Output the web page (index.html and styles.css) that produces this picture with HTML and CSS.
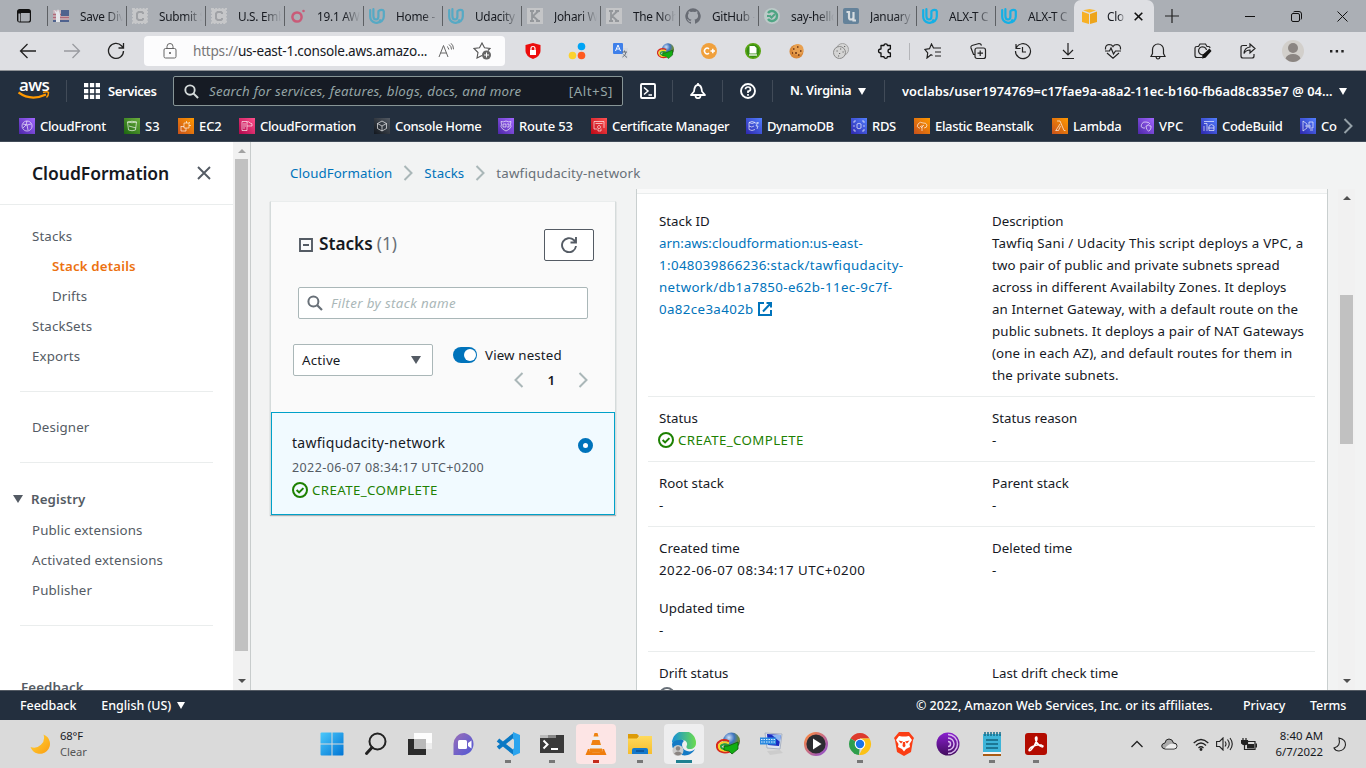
FILE: index.html
```html
<!DOCTYPE html>
<html lang="en">
<head>
<meta charset="utf-8">
<title>CloudFormation - Stack tawfiqudacity-network</title>
<link rel="stylesheet" href="styles.css">
</head>
<body>
<svg width="0" height="0" class="defs">
  <defs>
    <linearGradient id="gp" x1="0" y1="1" x2="1" y2="0"><stop offset="0" stop-color="#4d27a8"/><stop offset="1" stop-color="#a166ff"/></linearGradient>
    <linearGradient id="gg" x1="0" y1="1" x2="1" y2="0"><stop offset="0" stop-color="#1b660f"/><stop offset="1" stop-color="#6cae3e"/></linearGradient>
    <linearGradient id="go" x1="0" y1="1" x2="1" y2="0"><stop offset="0" stop-color="#c8511b"/><stop offset="1" stop-color="#f90"/></linearGradient>
    <linearGradient id="gk" x1="0" y1="1" x2="1" y2="0"><stop offset="0" stop-color="#b0084d"/><stop offset="1" stop-color="#ff4f8b"/></linearGradient>
    <linearGradient id="gr" x1="0" y1="1" x2="1" y2="0"><stop offset="0" stop-color="#bd0816"/><stop offset="1" stop-color="#ff5252"/></linearGradient>
    <linearGradient id="gb" x1="0" y1="1" x2="1" y2="0"><stop offset="0" stop-color="#2e27ad"/><stop offset="1" stop-color="#527fff"/></linearGradient>
    <linearGradient id="gd" x1="0" y1="1" x2="1" y2="0"><stop offset="0" stop-color="#12171e"/><stop offset="1" stop-color="#545b64"/></linearGradient>
    <linearGradient id="win" x1="0" y1="0" x2="1" y2="1"><stop offset="0" stop-color="#4cc9fb"/><stop offset="1" stop-color="#0074d4"/></linearGradient>
    <linearGradient id="moon" x1="0" y1="0" x2="1" y2="1"><stop offset="0" stop-color="#ffd83a"/><stop offset="1" stop-color="#fb9c10"/></linearGradient>
    <linearGradient id="chat" x1="0" y1="0" x2="1" y2="1"><stop offset="0" stop-color="#9a6fb8"/><stop offset="1" stop-color="#4f57d6"/></linearGradient>
    <linearGradient id="edge" x1="0" y1="0" x2="1" y2="0"><stop offset="0" stop-color="#168fd8"/><stop offset="1" stop-color="#6bdc4e"/></linearGradient>
    <linearGradient id="fold" x1="0" y1="0" x2="0" y2="1"><stop offset="0" stop-color="#ffda5c"/><stop offset="1" stop-color="#f6bd2f"/></linearGradient>
    <linearGradient id="ring" x1="0" y1="0" x2="1" y2="1"><stop offset="0" stop-color="#ff8a3c"/><stop offset="1" stop-color="#8d4fd0"/></linearGradient>
    <linearGradient id="tor" x1="0" y1="0" x2="0" y2="1"><stop offset="0" stop-color="#8a1fd0"/><stop offset="1" stop-color="#420c5d"/></linearGradient>
    <radialGradient id="globe" cx=".35" cy=".3" r=".8"><stop offset="0" stop-color="#cfe0f4"/><stop offset=".4" stop-color="#3f74c0"/><stop offset=".75" stop-color="#6f8c2c"/><stop offset="1" stop-color="#1d2f50"/></radialGradient>
    <symbol id="uda" viewBox="0 0 16 16"><path d="M1.200 2.200v6.300c0 3 2 5.300 5 6.200 2.600.4 4.600-.8 5-2.500M4.400 1.200v6.800c0 2.200 1 3.500 2.600 3.500s2.400-1.200 2.400-3V3.200c2.300-1.700 5-1.700 5.400 0v5.300c0 3.500-3 6-6.400 6" fill="none" stroke="currentColor" stroke-width="2.200" stroke-linecap="round" stroke-linejoin="round"/></symbol>
    <symbol id="stamp" viewBox="0 0 16 16"><rect x="1" y="1" width="14" height="14" fill="#c6c7c9" stroke="#c6c7c9" stroke-width="2" stroke-dasharray="2 1.200"/><path d="M11 6V5L10 4H6.500L5 5.500v5L6.500 12H10l1-1v-1" fill="none" stroke="#a0a2a6" stroke-width="2"/></symbol>
    <symbol id="kk" viewBox="0 0 16 16"><path fill="#c4c5c7" d="M0 0h16v16H0z"/><path d="M3 3h4M3 13h4M5 3v10M9 3h4M9 13h4M11.500 3 6 8l5.500 5" fill="none" stroke="#94979b" stroke-width="1.800"/></symbol>
    <symbol id="idm" viewBox="0 0 24 24"><circle cx="15.500" cy="9" r="8.500" fill="url(#globe)"/><g fill="none"><path d="M13 9.500C6 6 0 10 1 15c1 5 7 6.500 13 4.500" stroke="#d8281c" stroke-width="2"/><path d="M13 11.500c-6-3-10.500 0-10 3.500.6 3.500 5 4.500 10 3" stroke="#f6d423" stroke-width="2"/><path d="M13 13.500c-4-2-8.500-1-8 1.500.5 2.200 4 2.800 8 1.500" stroke="#27a03a" stroke-width="2"/></g><path d="M8 14h4l10-4v7l-6 5-3-3-5-1z" fill="#12ae12" stroke="#0a5a08" stroke-width=".8"/></symbol>
    <symbol id="ok" viewBox="0 0 16 16"><circle cx="8" cy="8" r="7" fill="none" stroke="#1d8102" stroke-width="2"/><path d="M4.600 8l2.500 2.400 4.300-4.300" fill="none" stroke="#1d8102" stroke-width="2"/></symbol>
    <symbol id="mag" viewBox="0 0 16 16"><circle cx="6.400" cy="6.400" r="5" fill="none" stroke="currentColor" stroke-width="2"/><path d="M10 10l5 5" stroke="currentColor" stroke-width="2.200"/></symbol>
    <symbol id="chev" viewBox="0 0 10 16"><path d="M1.500 1l7 7-7 7" fill="none" stroke="currentColor" stroke-width="2"/></symbol>
  </defs>
</svg>

<div class="tabs">
  <div class="tabmenu"><svg width="16" height="16" viewBox="0 0 16 16"><rect x="1.600" y="1.600" width="12.800" height="12.400" rx="2" fill="none" stroke="#111" stroke-width="1.200"/><path d="M2 2h12v3H5v9H2z" fill="#111"/><path d="M2.400 5.500h2v8h-2z" fill="#abafb5"/></svg></div>
  <div class="tab"><svg width="16" height="16" viewBox="0 0 16 16"><path fill="#c9b7bd" d="M0 2h16v12H0z"/><path d="M0 6.500h16M0 9.500h16M0 12.500h16" stroke="#b06878" stroke-width="1.500"/><path fill="#4f628e" d="M8 2h8v6H8zM0 12h16v2H0z"/><path fill="#e4e6ea" d="M3 14V6L1 2l3 2 1-3 2 5v8z"/></svg><span>Save Div</span></div>
  <div class="tab"><svg width="16" height="16"><use href="#stamp"/></svg><span>Submit S</span></div>
  <div class="tab"><svg width="16" height="16"><use href="#stamp"/></svg><span>U.S. Emb</span></div>
  <div class="tab"><svg width="16" height="16" viewBox="0 0 16 16"><circle cx="7" cy="9" r="4.600" fill="none" stroke="#c95b78" stroke-width="2.500"/><circle cx="13.500" cy="3" r="1.300" fill="#c95b78"/></svg><span>19.1 AW</span></div>
  <div class="tab dim"><svg width="16" height="16"><use href="#uda"/></svg><span>Home -</span></div>
  <div class="tab dim"><svg width="16" height="16"><use href="#uda"/></svg><span>Udacity</span></div>
  <div class="tab"><svg width="16" height="16"><use href="#kk"/></svg><span>Johari W</span></div>
  <div class="tab"><svg width="16" height="16"><use href="#kk"/></svg><span>The Noh</span></div>
  <div class="tab"><svg width="16" height="16" viewBox="0 0 16 16"><path fill="#686c74" d="M8 .2a8 8 0 0 0-2.500 15.500c.4 0 .5-.2.500-.4v-1.500c-2.200.5-2.700-1-2.700-1-.4-.9-.9-1.200-.9-1.200-.7-.5 0-.5 0-.5.800 0 1.200.8 1.200.8.700 1.200 1.900.9 2.400.7 0-.5.300-.9.500-1.100-1.800-.2-3.600-.9-3.600-4 0-.9.300-1.600.8-2.100 0-.2-.3-1 .1-2.100 0 0 .7-.2 2.200.8a7.500 7.500 0 0 1 4 0c1.500-1 2.200-.8 2.200-.8.400 1.100.1 1.900.1 2.100.5.500.8 1.200.8 2.100 0 3.100-1.900 3.800-3.700 4 .3.300.6.800.6 1.500v2.300c0 .2.100.4.500.4A8 8 0 0 0 8 .2z"/></svg><span>GitHub -</span></div>
  <div class="tab"><svg width="16" height="16" viewBox="0 0 16 16"><circle cx="8" cy="8" r="8" fill="#bccac8"/><path d="M4 5a5 5 0 1 1 0 6" fill="none" stroke="#4fa584" stroke-width="2.400"/><path d="M3 8h2.500M5.500 7.500l2 2L11 6" fill="none" stroke="#4fa584" stroke-width="2"/></svg><span>say-hello</span></div>
  <div class="tab"><svg width="16" height="16" viewBox="0 0 16 16"><rect width="16" height="16" rx="2" fill="#64829a"/><path d="M3.500 4H6v5.500q0 2 2 2t2.500-2V4M10.500 4v8.500H13" fill="none" stroke="#d6dce0" stroke-width="2.200"/></svg><span>January</span></div>
  <div class="tab udac"><svg width="16" height="16"><use href="#uda"/></svg><span>ALX-T C</span></div>
  <div class="tab udac"><svg width="16" height="16"><use href="#uda"/></svg><span>ALX-T C</span></div>
  <div class="tab active"><svg width="15" height="15" viewBox="0 0 15 15"><path fill="#f7b024" d="M0 2.500 7 5v10L0 13z"/><path fill="#eda41b" d="M8 5l7-2.500V13l-7 2z"/><path fill="#f9b934" d="M1 1.300 7.500 0 14 1.300 7.500 3.800z"/></svg><span>Clo</span><svg width="9" height="9" viewBox="0 0 9 9"><path d="M.7.7l7.600 7.600M8.300.7.7 8.300" stroke="#111" stroke-width="1.600"/></svg></div>
  <div class="newtab"><svg width="14" height="14" viewBox="0 0 14 14"><path d="M7 0v14M0 7h14" stroke="#222" stroke-width="1.200"/></svg></div>
  <div class="winbtns">
    <svg width="10" height="10" viewBox="0 0 10 10"><path d="M0 5.500h10" stroke="#111"/></svg>
    <svg width="11" height="11" viewBox="0 0 11 11"><rect x=".5" y="2.500" width="8" height="8" rx="1.500" fill="none" stroke="#111"/><path d="M2.500 1q.5-.5 1.500-.5h4q2.500 0 2.500 2.500v4q0 1-.5 1.500" fill="none" stroke="#111"/></svg>
    <svg width="11" height="11" viewBox="0 0 11 11"><path d="M.5.5l10 10M10.500.5l-10 10" stroke="#111"/></svg>
  </div>
</div>

<div class="toolbar">
  <div class="navbtns">
    <svg width="18" height="16" viewBox="0 0 18 16"><path d="M17 8H1.500M8.500 1l-7 7 7 7" fill="none" stroke="#222" stroke-width="1.300"/></svg>
    <svg width="18" height="16" viewBox="0 0 18 16"><path d="M1 8h15.500M9.500 1l7 7-7 7" fill="none" stroke="#999ba0" stroke-width="1.300"/></svg>
    <svg width="18" height="18" viewBox="0 0 18 18"><path d="M16.500 9a7.500 7.500 0 1 1-2-5.200L16.500 6M16.500 1v5h-5" fill="none" stroke="#222" stroke-width="1.300"/></svg>
  </div>
  <div class="url">
    <svg width="14" height="16" viewBox="0 0 14 16"><rect x="1" y="5.500" width="12" height="9.500" rx="1.500" fill="none" stroke="#666"/><path d="M4 5.500V3.500a3 3 0 0 1 6 0v2" fill="none" stroke="#666"/><circle cx="7" cy="10" r="1" fill="#555"/></svg>
    <span class="addr"><i>https://</i>us-east-1.console.aws.amazo...</span>
    <svg width="16" height="16" viewBox="0 0 16 16"><path d="M1 14 5.500 2.500 10 14M2.500 10h6M9 3.500q1.500.8 1.800 3M11 1.500q2.500 1.800 2.500 5M13 .3q2.500 2 2.500 6" fill="none" stroke="#666"/></svg>
    <svg width="18" height="18" viewBox="0 0 18 18"><path d="M9 13.500 4 16l1-5.500-4-4L6.500 5.800 9 1l2.500 4.800 5.500.7-2 2" fill="none" stroke="#555" stroke-width="1.100"/><circle cx="13.500" cy="13" r="4.500" fill="#666"/><path d="M13.500 10.500v5M11 13h5" stroke="#fff"/></svg>
  </div>
  <div class="exts">
    <svg width="16" height="16" viewBox="0 0 16 16"><path fill="#ec0c0c" d="M8 0l7.500 2v6q0 5-7.500 8Q.5 13 .5 8V2z"/><path fill="#fff" d="M5 7h6v5H5z"/><path d="M6 7V5q0-1.500 2-1.500T10 5v2" fill="none" stroke="#fff" stroke-width="1.200"/></svg>
    <svg width="18" height="18" viewBox="0 0 18 18"><circle cx="13.500" cy="4.500" r="3.800" fill="#00a4f5"/><circle cx="4.500" cy="13.500" r="3.800" fill="#fbd22e"/><circle cx="13.500" cy="13.500" r="3.800" fill="#ff5a1f"/></svg>
    <svg width="16" height="16" viewBox="0 0 16 16"><path fill="#d6d9de" d="M7 5h8v10.500H9z"/><rect width="10" height="11" rx="1" fill="#3f80ea"/><path d="M2.500 8 5 2l2.500 6M3.500 6h3" fill="none" stroke="#fff"/><path d="M9 9h5M11.500 7.500V9M13 9q0 3-3.500 5M10.500 11.500l3.500 3" fill="none" stroke="#69727e"/></svg>
    <svg width="17" height="17"><use href="#idm"/></svg>
    <svg width="16" height="16" viewBox="0 0 16 16"><circle cx="8" cy="8" r="8" fill="#f0a03c"/><path d="M8 5.800a2.800 2.800 0 1 0 0 4.400M9.500 8h4.500M11.800 5.800v4.400" fill="none" stroke="#fff" stroke-width="1.500"/></svg>
    <svg width="16" height="16" viewBox="0 0 16 16"><circle cx="8" cy="8" r="7.200" fill="#358d12" stroke="#5aa513" stroke-width="1.600"/><path fill="#fff" d="M4.500 3h5l2 2v5.500h-7z"/><path d="M4 12h8" stroke="#e9f3e2" stroke-width="1.500"/></svg>
    <svg width="16" height="16" viewBox="0 0 16 16"><circle cx="7.500" cy="8.500" r="7" fill="#d9893a"/><circle cx="9" cy="6.500" r="5.500" fill="#e8a050"/><path d="M4 6h1.500M8 4h1.500M6 10h2M11 8h1.500M9 12h1.500M3 10h1" stroke="#6b3212" stroke-width="1.500"/></svg>
    <svg width="16" height="16" viewBox="0 0 16 16"><circle cx="9.500" cy="6.500" r="6" fill="#d4d4d4" stroke="#a2a2a2"/><circle cx="6.500" cy="9.500" r="6" fill="#d4d4d4" stroke="#8a8a8a"/><path d="M3.500 8h1.200M7 6h1.200M6 10.500h1.200M9.500 9h1.200M5 13h1.200M11 3.500h1.200" stroke="#666" stroke-width="1.200"/></svg>
    <svg width="16" height="16" viewBox="0 0 16 16"><path d="M4 2.500h3q0-1.700 1.700-1.700t1.700 1.700h3V6q-2.400 0-2.400 2t2.400 2v3.700h-3q0 1.600-1.700 1.600T7 13.700H4V10Q1.500 10 1.500 8T4 6z" fill="none" stroke="#111" stroke-width="1.300" stroke-linejoin="round"/></svg>
  </div>
  <div class="tsep"></div>
  <div class="exts acts">
    <svg width="18" height="16" viewBox="0 0 18 16"><path d="M8.500 12.500 7 11.800 3 15l.7-5L1 6.500l4.500-.8L7.500 1l2 4H17M11 9h6M11 13h6" fill="none" stroke="#222" stroke-width="1.200"/></svg>
    <svg width="18" height="18" viewBox="0 0 18 18"><rect x="6" y="6" width="10.500" height="10.500" rx="2" fill="none" stroke="#222" stroke-width="1.200"/><path d="M11.200 8.500v5.500M8.500 11.200H14M6 12.500H4.500L2 6q-.5-2 1-2.500L10 1.500q2 0 2.500 2" fill="none" stroke="#222" stroke-width="1.200"/></svg>
    <svg width="18" height="18" viewBox="0 0 18 18"><path d="M2 2v4.500h4.500M2.200 6A7.500 7.500 0 1 1 1.500 9M8.500 5v5H12" fill="none" stroke="#222" stroke-width="1.200"/></svg>
    <svg width="14" height="18" viewBox="0 0 14 18"><path d="M7 1v12M2 8l5 5 5-5M1 16.500h12" fill="none" stroke="#222" stroke-width="1.200"/></svg>
    <svg width="18" height="16" viewBox="0 0 18 16"><path d="M1.500 6.500Q1 2 5 1.500 8 1.500 9 3.500q1-2 4-2Q17 2 16.500 6.500M3 10l6 5.200L15 10M1 8h4.500L7 5l2.500 6L11.500 8H17" fill="none" stroke="#222" stroke-width="1.200"/></svg>
    <svg width="16" height="17" viewBox="0 0 16 17"><path d="M1 13.500h14l-1.500-3V6.500a5.500 5.500 0 0 0-11 0v4zM6 14q.5 2 2 2t2-2" fill="none" stroke="#222" stroke-width="1.200"/></svg>
    <svg width="18" height="16" viewBox="0 0 18 16"><path d="M8 14.500H3q-2 0-2-2V5q0-1.500 2-1.500h1.500L6 1h5.500L13 3.500h1.500Q16 3.500 16 5M11 11a4 4 0 1 1 1.500-4" fill="none" stroke="#222" stroke-width="1.200"/><path d="M15.500 5.500 8.500 12 8 15.500l3.500-.7L17.500 8z" fill="#111"/></svg>
    <svg width="16" height="16" viewBox="0 0 16 16"><path d="M7 2.500H3q-2 0-2 2V13q0 2 2 2h9q2 0 2-2v-2M10 4V1l5 4.500-5 4.500V7q-4 0-6 3.500Q4.500 4.500 10 4z" fill="none" stroke="#222" stroke-width="1.200"/></svg>
    <svg width="22" height="22" viewBox="0 0 22 22"><circle cx="11" cy="11" r="11" fill="#d2cfcb"/><circle cx="11" cy="8" r="5" fill="#8b8582"/><path d="M3.500 18.500Q5 14 11 14t7.500 4.500Q15 22 11 22t-7.500-3.500z" fill="#8b8582"/></svg>
    <svg width="14" height="4" viewBox="0 0 14 4"><path d="M0 1h2.400v2.400H0zM5.700 1h2.400v2.400H5.700zM11.300 1h2.400v2.400h-2.400z" fill="#222"/></svg>
  </div>
</div>

<header class="aws">
  <div class="row1">
    <div class="logo"><b>aws</b><svg width="32" height="9" viewBox="0 0 32 9"><path d="M.5 1.500Q13 10.500 28 3.500" fill="none" stroke="#f90" stroke-width="2.200"/><path d="M25 1.500q4-1.500 5.500 0 0 3.500-2 5" fill="none" stroke="#f90" stroke-width="1.500"/></svg></div>
    <svg class="grid" width="16" height="16" viewBox="0 0 16 16"><path fill="#fff" d="M0 0h4.300v4.300H0zM5.900 0h4.300v4.300H5.900zM11.700 0H16v4.300h-4.300zM0 5.900h4.300v4.300H0zM5.900 5.900h4.300v4.300H5.900zM11.700 5.900H16v4.300h-4.300zM0 11.700h4.300V16H0zM5.900 11.700h4.300V16H5.900zM11.700 11.700H16V16h-4.300z"/></svg>
    <b class="services">Services</b>
    <div class="search"><svg width="15" height="15"><use href="#mag"/></svg><em>Search for services, features, blogs, docs, and more</em><span>[Alt+S]</span></div>
    <div class="hicon"><svg width="16" height="16" viewBox="0 0 16 16"><rect x="1" y="1" width="14" height="14" rx="1" fill="none" stroke="#fff" stroke-width="1.900"/><path d="M4 4.500l4 3.500-4 3.500M8.500 12H12" fill="none" stroke="#fff" stroke-width="1.500"/></svg></div>
    <div class="hicon"><svg width="16" height="16" viewBox="0 0 16 16"><path d="M1 12h14l-3-3.500q-.5-6.500-4-6.500T4 8.500z" fill="none" stroke="#fff" stroke-width="1.800" stroke-linejoin="round"/><path d="M8 0v2M5.500 12.500q0 2.700 2.500 2.700t2.500-2.700" fill="none" stroke="#fff" stroke-width="1.700"/></svg></div>
    <div class="hicon"><svg width="16" height="16" viewBox="0 0 16 16"><circle cx="8" cy="8" r="7" fill="none" stroke="#fff" stroke-width="1.900"/><path d="M5.500 6.300Q5.500 4 8 4t2.500 2.200Q10.500 8 8 8.300V10M8 11v1.800" fill="none" stroke="#fff" stroke-width="1.700"/></svg></div>
    <div class="region"><b>N. Virginia</b><i class="caret"></i></div>
    <div class="user"><b>voclabs/user1974769=c17fae9a-a8a2-11ec-b160-fb6ad8c835e7 @ 04...</b><i class="caret"></i></div>
  </div>
  <div class="row2">
    <div class="fav f1"><svg viewBox="0 0 16 16"><path fill="url(#gp)" d="M0 0h16v16H0z"/><path d="M8 3a5 5 0 1 0 .1 0M4 6l4 1 1 5M8 3l-1 4-3 3M8 7l4-1" class="ln"/></svg>CloudFront</div>
    <div class="fav f2"><svg viewBox="0 0 16 16"><path fill="url(#gg)" d="M0 0h16v16H0z"/><path d="M3.500 4l1 8q3.500 1.500 7 0l1-8q-4.500-1.500-9 0q4.500 1.500 9 0M5 8l7 2" class="ln"/></svg>S3</div>
    <div class="fav f3"><svg viewBox="0 0 16 16"><path fill="url(#go)" d="M0 0h16v16H0z"/><path d="M6 5h5v5H6zM3 8.500h3M3 8v5h5v-3M8.500 3v2M11 7.500h2M12 4l-1 1" class="ln"/></svg>EC2</div>
    <div class="fav f4"><svg viewBox="0 0 16 16"><path fill="url(#gk)" d="M0 0h16v16H0z"/><path d="M3 3.500h5v9H3zM4 6h3M4 8h3M4 10h2M8 8h5q1-3-2-3-1-2-3-1" class="ln"/></svg>CloudFormation</div>
    <div class="fav f5"><svg viewBox="0 0 16 16"><path fill="url(#gd)" d="M0 0h16v16H0z"/><path d="M8 3l4.500 2.500v5L8 13l-4.500-2.500v-5zM3.500 5.500 8 8l4.500-2.500M8 8v5" class="ln"/></svg>Console Home</div>
    <div class="fav f6"><svg viewBox="0 0 16 16"><path fill="url(#gp)" d="M0 0h16v16H0z"/><path d="M3 3.500q2 1 5-.5 3 1.500 5 .5-1 3 0 5-1 3-5 4.500-4-1.500-5-4.500 1-2 0-5zM5 6h3v3H5zM9 6h2v3H9" class="ln"/></svg>Route 53</div>
    <div class="fav f7"><svg viewBox="0 0 16 16"><path fill="url(#gr)" d="M0 0h16v16H0z"/><path d="M13 10V3.500H3V11h3M4.500 5.500h7M8 7.500a1.500 1.500 0 1 0 .1 0M7 10.500V13h3v-2.500" class="ln"/></svg>Certificate Manager</div>
    <div class="fav f8"><svg viewBox="0 0 16 16"><path fill="url(#gb)" d="M0 0h16v16H0z"/><path d="M3 4.500q3-2 6 0-3 2-6 0v7q3 2 6 0M3 8q3 2 5 0M12 4l-2 4h2l-1 3M9 5h4" class="ln"/></svg>DynamoDB</div>
    <div class="fav f9"><svg viewBox="0 0 16 16"><path fill="url(#gb)" d="M0 0h16v16H0z"/><path d="M6 6q2-1.500 4 0v4q-2 1.500-4 0zM3 5V3h2M11 3h2v2M3 11v2h2M11 13h2v-2M3 7v2M13 7v2" class="ln"/></svg>RDS</div>
    <div class="fav f10"><svg viewBox="0 0 16 16"><path fill="url(#go)" d="M0 0h16v16H0z"/><path d="M6 10H5q-3-1-1-4 2-3 5-1 3-.5 4 2 0 3-3 3M8 13V7M8 10l-2-2M8 9l2-2" class="ln"/></svg>Elastic Beanstalk</div>
    <div class="fav f11"><svg viewBox="0 0 16 16"><path fill="url(#go)" d="M0 0h16v16H0z"/><path d="M5 3h3l4 9.500h1.500M8 6l-4.500 7M8.500 8l-2 4.500H4" class="ln"/></svg>Lambda</div>
    <div class="fav f12"><svg viewBox="0 0 16 16"><path fill="url(#gp)" d="M0 0h16v16H0z"/><path d="M7 10H5q-3-1-1.500-3.500Q5 3 8 4q3 0 4 2M8 8q2 0 2-1.500Q11 8 13 8v2q-1 3-2.500 3Q8 12 8 8z" class="ln"/></svg>VPC</div>
    <div class="fav f13"><svg viewBox="0 0 16 16"><path fill="url(#gb)" d="M0 0h16v16H0z"/><path d="M3 3.500h10M3 5.500h3V13M3 8v5M8 8q2.500-3 5 0M8 8v4.500h5V8M7 10h6" class="ln"/></svg>CodeBuild</div>
    <div class="fav f14"><svg viewBox="0 0 16 16"><path fill="url(#gb)" d="M0 0h16v16H0z"/><path d="M3 3v10l4-3V6L3 3M9 4h4v6H9zM10 12h3M5 8h6" class="ln"/></svg>Co</div>
    <svg class="more" width="10" height="16"><use href="#chev"/></svg>
  </div>
</header>

<div class="body">
  <nav class="side">
    <div class="sidehead"><b>CloudFormation</b><svg width="14" height="14" viewBox="0 0 14 14"><path d="M1 1l12 12M13 1 1 13" stroke="#545b64" stroke-width="1.900"/></svg></div>
    <ul class="links first"><li>Stacks</li><li class="sub on">Stack details</li><li class="sub">Drifts</li><li>StackSets</li><li>Exports</li></ul>
    <ul class="links designer"><li>Designer</li></ul>
    <div class="reg"><i class="caret"></i><b>Registry</b></div>
    <ul class="links regl"><li>Public extensions</li><li>Activated extensions</li><li>Publisher</li></ul>
    <b class="fb">Feedback</b>
  </nav>
  <div class="sb sbl"><i class="up"></i><div class="thumb"></div><i class="down"></i></div>
  <main>
    <div class="crumbs"><a>CloudFormation</a><svg width="10" height="16"><use href="#chev"/></svg><a>Stacks</a><svg width="10" height="16"><use href="#chev"/></svg><span>tawfiqudacity-network</span></div>
    <div class="cols">
      <section class="stacks">
        <div class="shead"><svg width="14" height="14" viewBox="0 0 14 14"><path d="M1 1h12v12H1zM4 7h6" fill="none" stroke="#545b64" stroke-width="1.900"/></svg><b>Stacks</b><span>(1)</span>
          <div class="btn"><svg width="16" height="16" viewBox="0 0 16 16"><path d="M15 9A7 7 0 1 1 12.800 3l2 2M15 0v5.500H9.500" fill="none" stroke="#545b64" stroke-width="1.900"/></svg></div></div>
        <div class="filter"><svg width="16" height="16"><use href="#mag"/></svg><em>Filter by stack name</em></div>
        <div class="opts">
          <div class="select"><span>Active</span><i class="caret"></i></div>
          <div class="nest">
            <div class="tog"><i><u></u></i><span>View nested</span></div>
            <div class="pager"><svg class="prev" width="10" height="16"><use href="#chev"/></svg><b>1</b><svg width="10" height="16"><use href="#chev"/></svg></div>
          </div>
        </div>
        <div class="card">
          <div class="info"><div class="nm">tawfiqudacity-network</div><div class="tm">2022-06-07 08:34:17 UTC+0200</div><div class="st"><svg width="16" height="16"><use href="#ok"/></svg><span>CREATE_COMPLETE</span></div></div>
          <i class="radio"></i>
        </div>
      </section>
      <section class="detail">
        <div class="strip"></div>
        <div class="rows">
          <div class="pair p1">
            <div><div>Stack ID</div><a>arn:aws:cloudformation:us-east-<br><span class="wide">1:048039866236:stack/tawfiqudacity-<br>network/db1a7850-e62b-11ec-9c7f-<br>0a82ce3a402b</span> <svg width="14" height="14" viewBox="0 0 14 14"><path d="M6 1H1v12h12V8M8.500 1H13v4.500M13 1 5 9.500" fill="none" stroke="#0073bb" stroke-width="2"/></svg></a></div>
            <div><div>Description</div><p class="d1"><span>Tawfiq Sani / Udacity This script deploys a VPC, a</span><br>two pair of public and private subnets spread<br>across in different Availabilty Zones. It deploys<br>an Internet Gateway, with a default route on the<br>public subnets. It deploys a pair of NAT Gateways<br>(one in each AZ), and default routes for them in<br>the private subnets.</p></div>
          </div>
          <div class="pair"><div><div>Status</div><div class="st"><svg width="16" height="16"><use href="#ok"/></svg><span>CREATE_COMPLETE</span></div></div><div><div>Status reason</div><div>-</div></div></div>
          <div class="pair"><div><div>Root stack</div><div>-</div></div><div><div>Parent stack</div><div>-</div></div></div>
          <div class="pair"><div><div>Created time</div><div class="time">2022-06-07 08:34:17 UTC+0200</div><div class="upd">Updated time</div><div>-</div></div><div><div>Deleted time</div><div>-</div></div></div>
          <div class="pair"><div><div>Drift status</div><svg class="drift" width="16" height="16" viewBox="0 0 16 16"><circle cx="8" cy="8" r="7" fill="none" stroke="#687078" stroke-width="2"/></svg></div><div><div>Last drift check time</div></div></div>
        </div>
      </section>
      <div class="sb sbr"><i class="up"></i><div class="thumb"></div><i class="down"></i></div>
    </div>
  </main>
</div>

<footer class="foot"><span>Feedback</span><span class="lang">English (US)</span><i class="caret"></i><span class="cp">© 2022, Amazon Web Services, Inc. or its affiliates.</span><span class="pv">Privacy</span><span class="te">Terms</span></footer>

<div class="task">
  <div class="weather"><svg width="20" height="20" viewBox="0 0 20 20"><path d="M13.500.5A10 10 0 1 1 .5 13 10 10 0 0 0 13.500.5z" fill="url(#moon)"/></svg><div><div>68°F</div><div class="cl">Clear</div></div></div>
  <div class="apps">
    <div><svg width="24" height="24" viewBox="0 0 24 24"><rect x=".5" y=".5" width="23" height="23" rx="1" fill="url(#win)"/><path d="M12 0v24M0 12h24" stroke="#dadada"/></svg></div>
    <div><svg width="24" height="24" viewBox="0 0 24 24"><circle cx="13.500" cy="9.500" r="8" fill="none" stroke="#222" stroke-width="2"/><path d="M8 15.500 2.500 21.500" stroke="#222" stroke-width="3" stroke-linecap="round"/></svg></div>
    <div><svg width="24" height="24" viewBox="0 0 24 24"><path fill="#2b2b2b" d="M0 7h18v16H0z"/><path fill="#fff" opacity=".95" d="M6 1h18v15H18V7H6z"/><path fill="#b9b9b9" d="M6 7h12v10H6z"/><path fill="#eee" d="M18 11h6v6h-6z"/></svg></div>
    <div><svg width="24" height="24" viewBox="0 0 24 24"><path fill="url(#chat)" d="M12.500 1A11 11 0 1 1 8 23H1.500V12.500A11 11 0 0 1 12.500 1z"/><rect x="6" y="8" width="9" height="9" rx="1.500" fill="#fff"/><path fill="#fff" d="M16 11l3.500-2.500v8L16 14z"/></svg></div>
    <div class="run"><svg width="24" height="24" viewBox="0 0 24 24"><path d="M18 3 2 16M18 21 2 8" stroke="#0b79c4" stroke-width="4"/><path fill="#2aa4ee" d="M17 0l7 3v18l-7 3z"/><path d="M18 7v10l-6.500-5z" fill="#dadada"/></svg></div>
    <div class="run"><svg width="24" height="24" viewBox="0 0 24 24"><path fill="#3a3a3a" d="M0 3h24v18H0z"/><path fill="#bbb" d="M0 3h8v3H0z"/><path fill="#888" d="M8 3h8v3H8z"/><path d="M3.500 8.500l4 4-4 4M11 17h7" fill="none" stroke="#fff" stroke-width="2"/></svg></div>
    <div class="run vlc"><svg width="22" height="24" viewBox="0 0 22 24"><path fill="#f07d0c" d="M3 17h16l2.500 6h-21z"/><path fill="#eee" d="M9.500 1h3L18 19q-7 3-14 0z"/><path fill="#ef8210" d="M9.500 1h3l1 3.500H8.500zM7.500 8h7l1.500 5H6zM5 16.500h12l1 3q-7 2.500-14 0z"/></svg></div>
    <div class="run"><svg width="24" height="24" viewBox="0 0 24 24"><path fill="#dd9b08" d="M0 2h9l2 2-2 3H0z"/><path fill="url(#fold)" d="M0 6.500h9L12 4h12v18H0z"/><path d="M4 22v-4q0-2 2-2h12q2 0 2 2v4z" fill="#1479cb"/><path d="M8 19h8" stroke="#0b4f92" stroke-width="1.500"/></svg></div>
    <div class="run edge"><svg width="24" height="24" viewBox="0 0 24 24"><path fill="#147ac5" d="M0 12C2 6 8 5 12 9c-3 2-3 8 3 10 3 1 6 0 8-2-3 6-10 8-16 5Q0 19 0 12z"/><path fill="url(#edge)" d="M0 11A12 12 0 0 1 24 11c0 4-3 6-6 6-4 0-4-2-3-4 1-4-4-6-8-5-4 0-6 2-7 3z"/><circle cx="6" cy="18.500" r="5.500" fill="#ccc"/><circle cx="6" cy="16.500" r="2.200" fill="#8b8582"/><path d="M2 21.500q4-4 8 0-4 4-8 0z" fill="#8b8582"/></svg></div>
    <div><svg width="24" height="24"><use href="#idm"/></svg></div>
    <div><svg width="24" height="24" viewBox="0 0 24 24"><path fill="#dfe5ef" stroke="#a9b2c2" d="M5 1l17 1-2 15-13-1z"/><path fill="#1a2bc0" d="M7 2l14 1-2 11L8 13z"/><path fill="#8fb6ef" d="M12 3l9 0-1 7z"/><path fill="#2c8ae0" d="M0 5.500h16v7H0z"/><path d="M1 7.500h14M1 10h14" stroke="#d7ecff" stroke-dasharray="1.500 1"/><path fill="#ccc" d="M7 19l13-1 3 3-13 2z"/></svg></div>
    <div><svg width="24" height="24" viewBox="0 0 24 24"><circle cx="12" cy="12" r="10.800" fill="#2c2c30" stroke="url(#ring)" stroke-width="2.400"/><path fill="#fff" d="M9 6.500v11l8.500-5.500z"/></svg></div>
    <div class="run"><svg width="24" height="24" viewBox="0 0 24 24"><path fill="#dd3a2c" d="M12 12 2.500 6.500A11 11 0 0 1 21.500 6.500H12z"/><path fill="#2d9e4b" d="M2.500 6.500 12 12v0l-1 11A11 11 0 0 1 2.500 6.500z"/><path fill="#fbc116" d="M21.500 6.500A11 11 0 0 1 11 23l5-9-4-7.500z"/><circle cx="12" cy="12" r="5.300" fill="#fff"/><circle cx="12" cy="12" r="4.200" fill="#1a73e8"/></svg></div>
    <div><svg width="24" height="24" viewBox="0 0 24 24"><path fill="#fb3d14" d="M7 0h10l2.500 3L22 6l-1 2-2 12-7 4-7-4L3 8 2 6l2.500-3z"/><path fill="#fff" d="M7 4l3 .5h4L17 4l3 4-2.500 4 .5 3-4 2-2 2.500-2-2.500-4-2 .5-3L4 8z"/><path fill="#fb3d14" d="M6.500 8.500l4.500 1-2 2zM17.500 8.500l-4.500 1 2 2zM11 10h2l.5 4-1.500 1.500-1.500-1.500z"/></svg></div>
    <div><svg width="24" height="24" viewBox="0 0 24 24"><circle cx="12" cy="12" r="11.500" fill="url(#tor)"/><path d="M12 2.500a9.500 9.500 0 0 1 0 19M12 6a6 6 0 0 1 0 12M12 9.500a2.500 2.500 0 0 1 0 5" fill="none" stroke="#d9b8ee" stroke-width="1.500"/></svg></div>
    <div class="run"><svg width="20" height="24" viewBox="0 0 20 24"><path fill="#3db4d8" d="M1 2h18v18H1z"/><path d="M3 0v4M6 0v4M9 0v4M12 0v4M15 0v4M18 0v4" stroke="#156a87" stroke-width="1.500"/><path d="M4 8h12M4 12h12M4 16h12" stroke="#12637e" stroke-width="1.500"/><path fill="#f4f4f4" d="M1 20h18v2H1z"/><path fill="#a95b14" d="M1 22h18v2H1z"/></svg></div>
    <div class="run"><svg width="22" height="22" viewBox="0 0 22 22"><rect width="22" height="22" rx="3" fill="#b30b00"/><path d="M4 17q1-3 6-4.500T18 13q0 2-3 0-4-3-4.500-7-.2-2 .8-2t.5 3Q10 13 6 17q-2 1.500-2 0z" fill="none" stroke="#fff" stroke-width="1.500"/></svg></div>
  </div>
  <div class="tray">
    <svg width="12" height="8" viewBox="0 0 12 8"><path d="M.5 7 6 1.500 11.500 7" fill="none" stroke="#222" stroke-width="1.300"/></svg>
    <svg class="t2" width="17" height="12" viewBox="0 0 17 12"><path d="M4 11h9q3 0 3-3T12.500 5Q11.500 1 8 1T4 5Q.7 5.500.7 8T4 11z" fill="#aaa" stroke="#222"/><path d="M4 10.500h9q2.500 0 2.500-2.500T12 6Q8 5 4 10.500z" fill="#eee"/></svg>
    <svg class="t3" width="16" height="13" viewBox="0 0 16 13"><path d="M.7 5q7.300-7 14.600 0M3 7.500q5-5 10 0M5.500 10q2.500-2.500 5 0" fill="none" stroke="#222" stroke-width="1.300"/><circle cx="8" cy="11.500" r="1.400" fill="#222"/></svg>
    <svg class="t4" width="17" height="14" viewBox="0 0 17 14"><path d="M.6 4.500h3L7 1v12L3.600 9.500h-3zM9 4.500q2 2.500 0 5M11.500 2.500q3.500 4.500 0 9M14 1q4.500 6 0 12" fill="none" stroke="#222" stroke-width="1.100"/></svg>
    <svg class="t5" width="16" height="13" viewBox="0 0 16 13"><path d="M2 0v3M5 0v3M.5 2.500h6v3Q3.500 8 .5 5zM3.500 7v5M7 3.500h7v8H4" fill="none" stroke="#222" stroke-width="1.200"/><path d="M6 6h7v4.500H6zM14.500 5.500H16v4h-1.500zM1 3h5v3H1z" fill="#222"/></svg>
    <div class="clock"><div>8:40 AM</div><div>6/7/2022</div></div>
    <svg class="t6" width="14" height="15" viewBox="0 0 14 15"><path d="M6 1q7 1.500 6.500 7-1 5.500-6.500 6-3.500 0-5-3Q8 9.500 6 1z" fill="none" stroke="#222" stroke-width="1.100"/></svg>
  </div>
</div>
</body>
</html>
```
FILE: styles.css
```css
* { box-sizing: border-box; }
body { margin: 0; width: 1366px; height: 768px; overflow: hidden; display: flex; flex-direction: column; font: 13.3px/22px "Noto Sans", "Open Sans", sans-serif; color: #16191f; white-space: nowrap; }
svg { display: block; flex: none; }
i, em { font-style: normal; }
b { font-weight: 600; }
.defs { position: absolute; }
ul, p { margin: 0; padding: 0; list-style: none; }
.caret { width: 0; height: 0; border: 4.500px solid transparent; border-top: 7px solid #fff; border-bottom: 0; flex: none; }

.tabs { height: 32px; background: #abafb5; display: flex; align-items: center; flex: none; font-size: 11.800px; letter-spacing: -.25px; }
.tabmenu { width: 47px; padding-left: 16px; }
.tab { width: 79px; height: 32px; padding-left: 6px; display: flex; align-items: center; background: linear-gradient(#5d6064, #5d6064) 0 6px / 1px 20px no-repeat; }
.tab span { margin-left: 11px; width: 44px; -webkit-mask-image: linear-gradient(90deg, #000 60%, transparent 98%); mask-image: linear-gradient(90deg, #000 60%, transparent 98%); }
.tab.dim svg { color: #56a9c4; }
.tab.udac svg { color: #14b0e5; }
.tab.active { width: 80px; background: #dedfe3; border-radius: 7px 7px 0 0; padding-left: 8px; }
.tab.active span { width: 19px; margin: 0 8px 0 10px; }
.newtab { margin-left: 11px; }
.winbtns { display: flex; align-items: center; gap: 35.500px; margin-left: auto; padding-right: 18px; }

.toolbar { height: 39px; background: #dedfe3; border-bottom: 1px solid #8f9296; display: flex; align-items: center; flex: none; }
.navbtns { width: 144px; padding-left: 19px; display: flex; align-items: center; gap: 26px; }
.url { width: 361px; height: 30px; background: #fcfcfd; border-radius: 4px; display: flex; align-items: center; padding-left: 19px; }
.addr { width: 245px; margin-left: 16px; font-size: 13.600px; letter-spacing: -.24px; }
.addr i { color: #777; }
.url svg:last-child { margin-left: 19px; }
.exts { margin-left: 6px; width: 396px; height: 30px; display: grid; grid-template-columns: repeat(9, 44px); align-items: center; }
.exts svg { margin: auto; }
.tsep { width: 1px; height: 17px; background: #b4b5b9; margin-left: 2px; }
.exts.acts { margin-left: 1px; grid-template-columns: repeat(10, 44.900px); width: 450px; }

.aws { height: 71px; background: #232f3e; flex: none; color: #fff; border-bottom: 1px solid #414b58; }
.row1 { height: 40px; display: flex; align-items: center; }
.logo { width: 49px; height: 22px; margin-left: 18px; border-right: 1px solid #414b58; display: flex; flex-direction: column; align-items: flex-start; }
.logo b { font: 600 17px/18px "Open Sans", sans-serif; padding-left: 1px; height: 15px; letter-spacing: -.6px; margin-top: -4px; }
.grid { margin-left: 17px; }
.services { margin-left: 8px; width: 65px; font-size: 13px; letter-spacing: -.4px; }
.search { width: 450px; height: 30px; background: #161b24; border: 1px solid #879596; border-radius: 2px; display: flex; align-items: center; padding: 0 9px 0 10px; color: #95a5a6; }
.search svg { color: #d5dbdb; }
.search span { letter-spacing: .55px; }
.search em { margin-left: 10px; font-style: italic; flex: 1; letter-spacing: .22px; }
.hicon { width: 50px; height: 22px; border-right: 1px solid #414b58; display: flex; align-items: center; justify-content: center; }
.region { display: flex; align-items: center; gap: 6px; width: 112px; height: 22px; border-right: 1px solid #414b58; padding-left: 17px; }
.region b { width: 62px; font-size: 12.500px; letter-spacing: -.2px; }
.user { display: flex; align-items: center; padding-left: 17px; gap: 6px; }
.user b { width: 431px; font-size: 12.800px; letter-spacing: .05px; }
.row2 { height: 30px; padding-left: 19px; display: flex; align-items: center; font-weight: 500; font-size: 13px; }
.fav { display: flex; align-items: center; gap: 5px; flex: none; letter-spacing: -.33px; }
.fav svg { width: 16px; height: 16px; }
.ln { fill: none; stroke: #fff; stroke-opacity: .8; stroke-width: .8; }
.f1 { width: 105px; } .f2 { width: 54px; letter-spacing: 0; } .f3 { width: 61px; letter-spacing: -.1px; } .f4 { width: 135px; } .f5 { width: 124px; } .f6 { width: 93px; letter-spacing: -.15px; } .f7 { width: 155px; } .f8 { width: 105px; letter-spacing: -.45px; } .f9 { width: 63px; } .f10 { width: 138px; } .f11 { width: 86px; } .f12 { width: 63px; letter-spacing: 0; } .f13 { width: 99px; } .f14 { width: 36px; }
.more { margin-left: 7px; color: #95a1a8; }

.body { height: 548px; display: flex; flex: none; overflow: hidden; }
.side { width: 233px; background: #fff; overflow: hidden; color: #545b64; flex: none; letter-spacing: .13px; }
.sidehead { height: 63px; border-bottom: 1px solid #eaeded; padding: 0 22px 0 32px; display: flex; justify-content: space-between; align-items: center; color: #16191f; font-size: 17.500px; letter-spacing: -.05px; }
.links li { height: 30px; line-height: 30px; padding-left: 12px; }
.links .sub { padding-left: 32px; }
.links .on { color: #ec7211; font-weight: 600; letter-spacing: .15px; }
.links { margin: 0 20px; }
.first { padding: 16px 0 20px; border-bottom: 1px solid #eaeded; }
.designer { padding: 20px 0; border-bottom: 1px solid #eaeded; }
.reg { display: flex; align-items: center; height: 32px; margin-top: 20px; padding-left: 13px; gap: 8px; }
.reg .caret { border-width: 8px 5.500px 0; border-top-color: #545b64; }
.regl { padding-bottom: 20px; border-bottom: 1px solid #eaeded; }
.fb { display: block; margin: 50px 0 0 21px; }
.sb { width: 17px; background: #f1f1f1; display: flex; flex-direction: column; align-items: center; flex: none; }
.up, .down { border: 4px solid transparent; width: 0; height: 0; }
.up { border-top: 0; border-bottom-color: #505050; margin-top: 7px; }
.down { border-bottom: 0; border-top-color: #505050; margin: auto 0 7px; }
.thumb { width: 13px; background: #c1c1c1; }
.sbl { width: 18px; border-right: 1px solid #c8cccc; }
.sbl .up { border-bottom-color: #a3a3a3; }
.sbl .thumb { height: 492px; margin-top: 6px; }
main { flex: 1; background: #f2f3f3; padding-left: 19px; }
.crumbs { height: 47px; padding: 20px 0 0 20px; display: flex; color: #687078; letter-spacing: .09px; }
.crumbs svg { color: #aab7b8; margin: 3px 11px 0; }
.crumbs span { letter-spacing: .2px; }
a { color: #0073bb; }
.cols { display: flex; height: 501px; align-items: flex-start; }
.stacks { width: 346px; height: 314px; margin-top: 12px; background: #fafafa; border: 1px solid #d5dbdb; border-top-color: #eaeded; box-shadow: 0 1px 1px rgba(0, 28, 36, .3); }
.shead { display: flex; align-items: center; padding: 27px 21px 0 28px; font-size: 17.200px; height: 59px; }
.shead b { margin: -2px 0 0 6px; }
.shead span { margin: -2px 0 0 4px; color: #687078; font-size: 17.300px; }
.btn { width: 50px; height: 32px; border: 1px solid #545b64; border-radius: 2px; background: #fff; margin-left: auto; display: flex; align-items: center; justify-content: center; }
.filter { margin: 26px 0 0 27px; width: 290px; height: 32px; border: 1px solid #aab7b8; border-radius: 2px; background: #fff; display: flex; align-items: center; padding-left: 8px; gap: 8px; color: #687078; }
.filter em { font-style: italic; color: #aab7b8; letter-spacing: .38px; }
.opts { display: flex; margin: 25px 0 0 22px; height: 68px; }
.select { width: 140px; height: 32px; border: 1px solid #aab7b8; border-radius: 2px; background: #fff; display: flex; align-items: center; justify-content: space-between; padding: 0 11px 0 8px; letter-spacing: .2px; }
.select .caret { border-width: 8px 5.500px 0; border-top-color: #545b64; }
.nest { margin-left: 20px; width: 135px; }
.tog { display: flex; align-items: center; gap: 8px; height: 22px; letter-spacing: .15px; }
.tog i { width: 24px; height: 16px; border-radius: 8px; background: #0073bb; display: flex; justify-content: flex-end; align-items: center; padding-right: 1px; }
.tog u { width: 12px; height: 12px; border-radius: 50%; background: #fff; }
.pager { display: flex; align-items: center; justify-content: flex-end; height: 28px; gap: 23px; color: #aab7b8; }
.pager b { color: #16191f; }
.prev { transform: scaleX(-1); }
.card { height: 103px; background: #f1faff; border: 1px solid #00a1c9; display: flex; justify-content: space-between; padding: 19px 21px 0 20px; }
.nm { font-size: 14px; letter-spacing: .28px; }
.tm { font-size: 12.500px; letter-spacing: .4px; color: #545b64; line-height: 25px; padding-top: 1px; }
.st { display: flex; align-items: center; gap: 4px; color: #1d8102; letter-spacing: .38px; margin-left: -1px; }
.card .st { height: 20px; margin-left: 0; }
.radio { width: 15px; height: 15px; border: 5px solid #0073bb; border-radius: 50%; background: #fff; margin-top: 6px; }
.detail { width: 692px; height: 501px; overflow: hidden; margin-left: 20px; background: #fff; border: solid #c9cfcf; border-width: 0 1px; }
.strip { height: 5px; background: #fafafa; border-bottom: 1px solid #eaeded; }
.rows { padding: 0 12px 0 11px; }
.pair { padding: 10px 0 10px 11px; display: grid; grid-template-columns: 333px 1fr; border-bottom: 1px solid #eaeded; }
.p1 { padding-top: 16px; }
.p1 a { letter-spacing: .05px; }
.p1 a svg { display: inline-block; vertical-align: -2px; margin-left: 1px; }
.wide { letter-spacing: .37px; }
.d1 { letter-spacing: .12px; }
.d1 span { letter-spacing: .21px; }
.time { letter-spacing: .5px; }
.drift { margin-top: 3px; }
.upd { margin-top: 16px; }
.sbr { height: 501px; margin-left: 10px; }
.sbr .thumb { height: 149px; margin-top: 95px; }

.foot { height: 30px; background: #232f3e; border-top: 1px solid #545b64; display: flex; align-items: center; color: #fff; flex: none; font-size: 12.500px; font-weight: 500; padding-left: 20px; letter-spacing: -.05px; }
.foot .lang { margin-left: 25px; }
.foot .caret { margin-left: 6px; }
.cp { margin-left: auto; width: 298px; }
.pv { margin-left: 29px; width: 43px; }
.te { margin: 0 20px 0 24px; width: 36px; }

.task { height: 48px; background: #dadada; display: flex; align-items: center; flex: none; font-size: 11.200px; line-height: 16px; }
.weather { width: 310px; padding-left: 30px; display: flex; gap: 10px; align-items: center; letter-spacing: -.1px; }
.cl { color: #555; }
.apps { display: flex; }
.apps div { width: 40px; height: 40px; margin: 0 2px; display: flex; align-items: center; justify-content: center; border-radius: 4px; background: none no-repeat; }
.apps .run { background: linear-gradient(#777, #777) 17px 36px / 6px 3px no-repeat; }
.apps .vlc { background: linear-gradient(#c42b1c, #c42b1c) 17px 36px / 6px 3px no-repeat #fde5e5; }
.apps .edge { background: linear-gradient(#1f8191, #1f8191) 12px 36px / 16px 3px no-repeat #eeeeef; }
.tray { display: flex; align-items: center; margin-left: 73px; }
.t2 { margin-left: 18px; } .t3 { margin-left: 15px; } .t4 { margin-left: 7px; } .t5 { margin-left: 8px; }
.clock { text-align: right; width: 66px; font-size: 11.400px; }
.t6 { margin-left: 10px; }
```
